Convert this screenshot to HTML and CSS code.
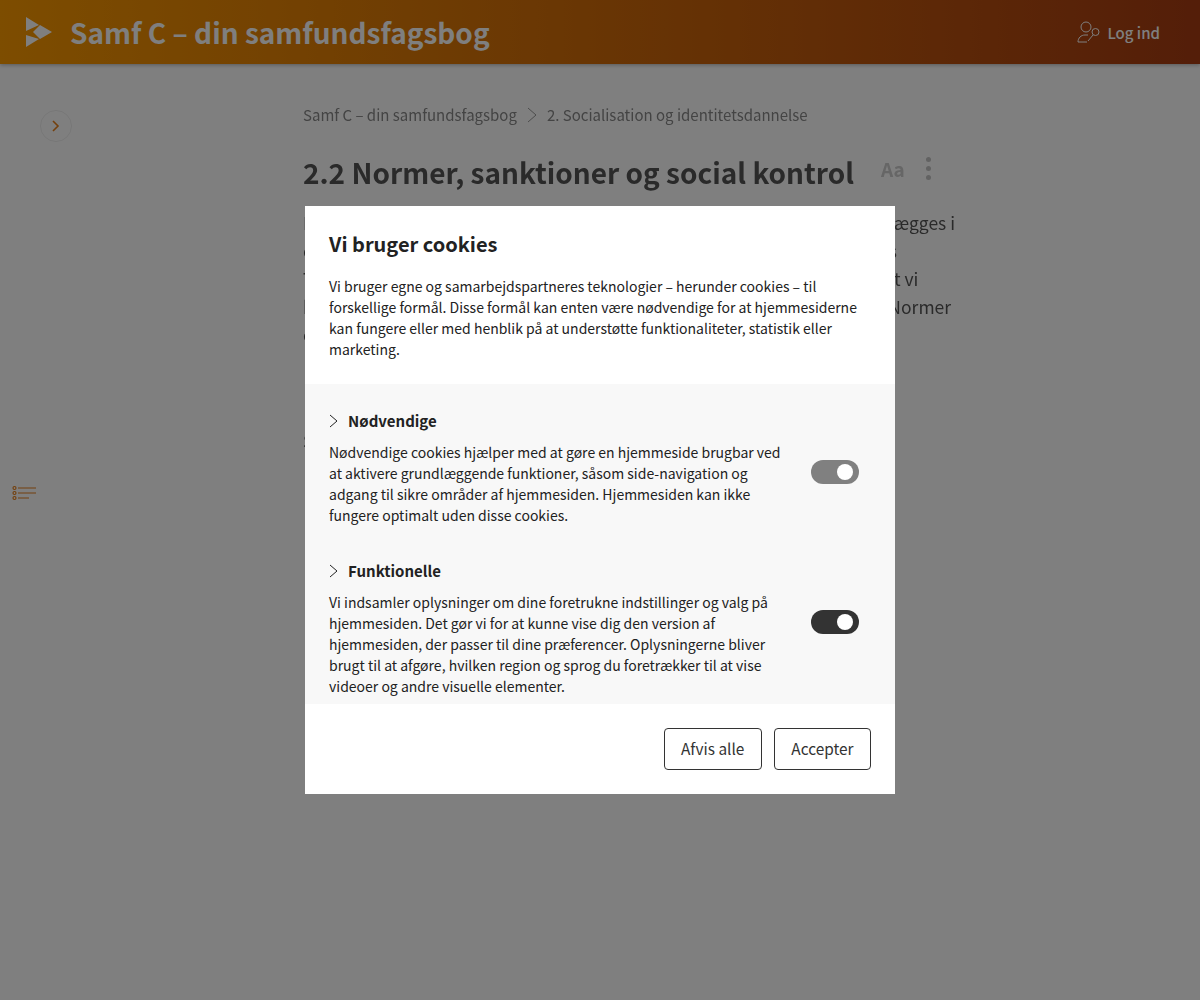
FILE: index.html
```html
<!DOCTYPE html>
<html lang="da">
<head>
    <meta charset="UTF-8">
    <meta name="viewport" content="width=device-width, initial-scale=1.0">
    <title>Samf C</title>
    <link rel="stylesheet" href="styles.css">
</head>
<body>
    <header class="topbar">
        <svg class="logo" width="26" height="30" viewBox="0 0 26 30">
            <polygon points="0,0 13,8 0,14" />
            <polygon points="0,30 13,22 0,18" />
            <polygon points="14,8 26,15 14,22 7,15" />
        </svg>
        <div class="book-title">Samf C – din samfundsfagsbog</div>
        <a class="login">
            <svg width="24" height="22" viewBox="0 0 24 22" fill="none" stroke="currentColor" stroke-width="1">
                <circle cx="9" cy="6" r="5" />
                <path d="M1 21c0-4 3-7 7-7h3M1 21h9" />
                <circle cx="18.500" cy="11" r="3.500" />
                <path d="M16 14l-5 6" />
            </svg>
            Log ind
        </a>
    </header>

    <div class="page">
        <aside class="sidebar">
            <div class="round-btn">
                <svg width="10" height="14" viewBox="0 0 10 14" fill="none" stroke="#e8801a" stroke-width="1.600"><path d="M2 2l5 5-5 5" /></svg>
            </div>
            <svg class="toc-icon" width="25" height="16" viewBox="0 0 25 16" fill="none" stroke="#e8801a" stroke-width="1.200">
                <circle cx="2.500" cy="3" r="1.500" />
                <circle cx="2.500" cy="8" r="1.500" />
                <circle cx="2.500" cy="13" r="1.500" />
                <path d="M6 3h18M6 8h18M6 13h11" />
            </svg>
        </aside>

        <main class="content">
            <nav class="crumbs">
                <span>Samf C – din samfundsfagsbog</span>
                <svg width="10" height="16" viewBox="0 0 10 16" fill="none" stroke="#999" stroke-width="1"><path d="M1 1l8 7-8 7" /></svg>
                <span>2. Socialisation og identitetsdannelse</span>
            </nav>
            <div class="title-row">
                <h1>2.2 Normer, sanktioner og social kontrol</h1>
                <div class="tools">
                    <span class="aa">Aa</span>
                    <span class="kebab"><i></i><i></i><i></i></span>
                </div>
            </div>
            <p class="lead">
                <span>I alle samfund er der regler for, hvordan du opfører sig, og forventninger lægges i</span>
                <span>os allerede fra vi er små og de bliver en del af vores hverdag og liv i alle os</span>
                <span>Tænk på hvordan man står i kø i et supermarked eller det tøj som vi ved at vi</span>
                <span>bør have på til en fest vi kalder den slags regler for normer i sociologien. Normer</span>
                <span>er ofte uskrevne regler.</span>
            </p>
            <h2 class="sub">Sociale normer</h2>
        </main>
    </div>

    <div class="overlay">
        <div class="modal">
            <div class="modal-head">
                <h2>Vi bruger cookies</h2>
                <p>Vi bruger egne og samarbejdspartneres teknologier – herunder cookies – til forskellige formål. Disse formål kan enten være nødvendige for at hjemmesiderne kan fungere eller med henblik på at understøtte funktionaliteter, statistik eller marketing.</p>
            </div>
            <div class="modal-body">
                <section class="cookie-row">
                    <div class="cookie-text">
                        <h3>
                            <svg width="9" height="14" viewBox="0 0 9 14" fill="none" stroke="#222" stroke-width="1"><path d="M1 1l7 6-7 6" /></svg>
                            Nødvendige
                        </h3>
                        <p>Nødvendige cookies hjælper med at gøre en hjemmeside brugbar ved at aktivere grundlæggende funktioner, såsom side-navigation og adgang til sikre områder af hjemmesiden. Hjemmesiden kan ikke fungere optimalt uden disse cookies.</p>
                    </div>
                    <div class="toggle disabled"><b></b></div>
                </section>
                <section class="cookie-row">
                    <div class="cookie-text">
                        <h3>
                            <svg width="9" height="14" viewBox="0 0 9 14" fill="none" stroke="#222" stroke-width="1"><path d="M1 1l7 6-7 6" /></svg>
                            Funktionelle
                        </h3>
                        <p>Vi indsamler oplysninger om dine foretrukne indstillinger og valg på hjemmesiden. Det gør vi for at kunne vise dig den version af hjemmesiden, der passer til dine præferencer. Oplysningerne bliver brugt til at afgøre, hvilken region og sprog du foretrækker til at vise videoer og andre visuelle elementer.</p>
                    </div>
                    <div class="toggle"><b></b></div>
                </section>
            </div>
            <div class="modal-foot">
                <button class="btn">Afvis alle</button>
                <button class="btn">Accepter</button>
            </div>
        </div>
    </div>
</body>
</html>
```

FILE: styles.css
```css
* {
  box-sizing: border-box;
}

body {
  margin: 0;
  height: 1000px;
  overflow: hidden;
  background-color: #fff;
  font-family: "Noto Sans CJK SC", "Noto Sans", sans-serif;
  color: #555;
}

/* top bar */
.topbar {
  height: 64px;
  display: flex;
  align-items: center;
  padding: 0 40px 0 26px;
  background: linear-gradient(90deg, #fb9a00 0%, #a83c12 100%);
  box-shadow: 0 1px 4px rgba(0, 0, 0, 0.3);
  color: #fff;
}

.logo {
  fill: #fff;
  flex-shrink: 0;
}

.book-title {
  margin-left: 18px;
  font-size: 28px;
  font-weight: 600;
  line-height: 40px;
}

.login {
  margin-left: auto;
  display: flex;
  align-items: center;
  gap: 6px;
  font-size: 15px;
  font-weight: 500;
}

/* page */
.page {
  display: flex;
  will-change: transform;
}

.sidebar {
  width: 303px;
  flex-shrink: 0;
  padding: 46px 0 0 12px;
}

.round-btn {
  width: 32px;
  height: 32px;
  margin-left: 28px;
  border: 1px solid #eee;
  border-radius: 50%;
  display: flex;
  align-items: center;
  justify-content: center;
}

.toc-icon {
  display: block;
  margin-top: 343px;
}

.content {
  width: 660px;
  padding-top: 38px;
}

.crumbs {
  display: flex;
  align-items: center;
  gap: 10px;
  font-size: 15px;
  line-height: 26px;
  color: #888;
}

.title-row {
  display: flex;
  align-items: center;
  margin-top: 23px;
}

h1 {
  margin: 0;
  font-size: 28px;
  font-weight: 600;
  line-height: 42px;
  white-space: nowrap;
}

.tools {
  display: flex;
  align-items: center;
  margin-left: 27px;
  padding-bottom: 7px;
}

.aa {
  font-size: 19px;
  font-weight: 700;
  color: #ccc;
}

.kebab {
  display: flex;
  flex-direction: column;
  gap: 4px;
  margin-left: 21px;
}

.kebab i {
  width: 5px;
  height: 5px;
  border-radius: 50%;
  background-color: #c4c4c4;
}

.lead {
  margin: 16px 0 0;
  font-size: 17.500px;
  line-height: 28px;
}

.lead span {
  display: block;
  white-space: nowrap;
}

.sub {
  margin: 78px 0 0;
  font-size: 17.500px;
  line-height: 28px;
  font-weight: 400;
}

/* cookie dialog */
.overlay {
  position: fixed;
  top: 0;
  left: 0;
  width: 100%;
  height: 100%;
  display: flex;
  align-items: center;
  justify-content: center;
  background-color: rgba(0, 0, 0, 0.5);
}

.modal {
  width: 590px;
  height: 588px;
  display: flex;
  flex-direction: column;
  background-color: #fff;
  color: #222;
}

.modal-head {
  height: 178px;
  flex-shrink: 0;
  padding: 23px 24px 0;
}

.modal-head h2 {
  margin: 0;
  font-size: 20px;
  font-weight: 600;
  line-height: 30px;
}

.modal-head p {
  margin: 17px 0 0;
  font-size: 14px;
  line-height: 21px;
}

.modal-body {
  flex: 1;
  overflow: hidden;
  padding: 24px 36px 0 24px;
  background-color: #f8f8f8;
}

.cookie-row {
  display: flex;
  align-items: flex-start;
  justify-content: space-between;
  margin-bottom: 32px;
}

.cookie-text {
  width: 455px;
}

.cookie-text h3 {
  display: flex;
  align-items: center;
  gap: 10px;
  margin: 0 0 8px;
  font-size: 15px;
  font-weight: 600;
  line-height: 26px;
}

.cookie-text p {
  margin: 0;
  font-size: 14px;
  line-height: 21px;
}

.toggle {
  width: 48px;
  height: 24px;
  margin-top: 52px;
  display: flex;
  align-items: center;
  justify-content: flex-end;
  padding-right: 6px;
  border-radius: 12px;
  background-color: #333;
}

.toggle.disabled {
  background-color: #808080;
}

.toggle b {
  width: 16px;
  height: 16px;
  border-radius: 50%;
  background-color: #fff;
}

.modal-foot {
  height: 90px;
  flex-shrink: 0;
  display: flex;
  justify-content: flex-end;
  align-items: center;
  gap: 12px;
  padding-right: 24px;
}

.btn {
  height: 42px;
  padding: 0 16.500px 2px;
  background-color: #fff;
  border: 1px solid #333;
  border-radius: 4px;
  font-family: inherit;
  font-size: 15.400px;
  color: #333;
}
```
